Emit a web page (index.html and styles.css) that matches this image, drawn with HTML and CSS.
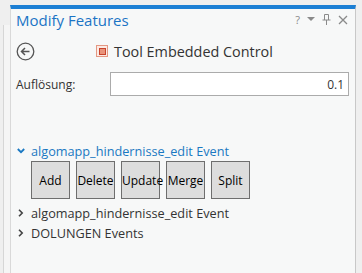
FILE: index.html
```html
<!DOCTYPE html>
<html lang="de">
<head>
    <meta charset="UTF-8">
    <title>Modify Features</title>
    <link rel="stylesheet" href="styles.css">
</head>
<body>
    <div class="frame">
        <div class="side"></div>

        <div class="pane">
            <div class="pane-head">
                <h1 class="pane-title">Modify Features</h1>
                <div class="pane-tools">
                    <span class="tool-help">?</span>
                    <svg class="tool-menu" width="8" height="5" viewBox="0 0 8 5"><path d="M0 0 L8 0 L4 4 Z" fill="#8a8a8a"/></svg>
                    <svg class="tool-pin" width="9" height="11" viewBox="0 0 9 11"><path d="M2.5 0.5 H6.5 M2.5 0.5 V6 M6.5 0.5 V6 M0.5 6 H8.5 M4.5 6 V11" stroke="#8a8a8a" stroke-width="1" fill="none"/></svg>
                    <svg class="tool-close" width="10" height="10" viewBox="0 0 10 10"><path d="M1 1 L9 9 M9 1 L1 9" stroke="#8a8a8a" stroke-width="1.3"/></svg>
                </div>
            </div>

            <div class="tool-row">
                <svg class="back" width="19" height="19" viewBox="0 0 19 19">
                    <circle cx="9.5" cy="9.5" r="8.3" stroke="#555" stroke-width="1.3" fill="none"/>
                    <path d="M13.5 9.5 H5.8 M9 6 L5.5 9.5 L9 13" stroke="#555" stroke-width="1.5" fill="none"/>
                </svg>
                <div class="tool-name">
                    <span class="tool-icon"><span class="tool-icon-inner"></span></span>
                    Tool Embedded Control
                </div>
            </div>

            <div class="field">
                <label class="field-label" for="res">Auflösung:</label>
                <input class="field-input" id="res" type="text" value="0.1">
            </div>

            <div class="group open">
                <div class="group-head">
                    <svg class="chev" width="8" height="6" viewBox="0 0 8 6"><path d="M0.8 1 L4 4.2 L7.2 1" stroke="#1a78c2" stroke-width="1.8" fill="none"/></svg>
                    algomapp_hindernisse_edit Event
                </div>
                <div class="buttons">
                    <button class="btn">Add</button>
                    <button class="btn">Delete</button>
                    <button class="btn">Update</button>
                    <button class="btn">Merge</button>
                    <button class="btn">Split</button>
                </div>
            </div>

            <div class="group">
                <div class="group-head">
                    <svg class="chev" width="8" height="8" viewBox="0 0 8 8"><path d="M2 0.8 L5.2 4 L2 7.2" stroke="#444" stroke-width="1.6" fill="none"/></svg>
                    algomapp_hindernisse_edit Event
                </div>
            </div>

            <div class="group">
                <div class="group-head">
                    <svg class="chev" width="8" height="8" viewBox="0 0 8 8"><path d="M2 0.8 L5.2 4 L2 7.2" stroke="#444" stroke-width="1.6" fill="none"/></svg>
                    DOLUNGEN Events
                </div>
            </div>
        </div>
    </div>
</body>
</html>
```

FILE: styles.css
```css
body {
    margin: 0;
    background-color: #efefef;
    font-family: "Open Sans", "Noto Sans", sans-serif;
    color: #333;
}

.frame {
    display: flex;
    height: 273px;
}

.side {
    width: 6px;
    margin: 25px 0 0 3px;
    border-left: 1px solid #d6d6d6;
    background-color: #f5f5f5;
}

.pane {
    width: 346px;
    margin-top: 5px;
    border-top: 4px solid #1c7fd4;
    border-left: 1px solid #d9d9d9;
    border-right: 1px solid #c8c8c8;
    background-color: #f7f8f8;
    padding: 0 5px;
    box-sizing: border-box;
}

.pane-head {
    display: flex;
    justify-content: space-between;
    align-items: flex-start;
    height: 27px;
}

.pane-title {
    margin: 1px 0 0 0;
    font-size: 15px;
    font-weight: normal;
    color: #1b74c5;
}

.pane-tools {
    display: flex;
    align-items: center;
    gap: 7px;
    margin-top: 3px;
    margin-right: 2px;
}

.tool-help {
    font-size: 11px;
    color: #8a8a8a;
}

.tool-row {
    display: flex;
    align-items: center;
    height: 30px;
}

.back {
    display: block;
}

.tool-name {
    display: flex;
    align-items: center;
    gap: 6px;
    margin-left: 61px;
    font-size: 14.4px;
    color: #333;
}

.tool-icon {
    display: flex;
    align-items: center;
    justify-content: center;
    width: 12px;
    height: 12px;
    box-sizing: border-box;
    border: 1px solid #e49883;
    background-color: #fbeae4;
}

.tool-icon-inner {
    width: 7px;
    height: 7px;
    box-sizing: border-box;
    border: 1px solid #c8432c;
    background-color: #e9937a;
}

.field {
    display: flex;
    align-items: center;
    margin-top: 6px;
}

.field-label {
    width: 94px;
    font-size: 12px;
    color: #333;
}

.field-input {
    width: 239px;
    height: 24px;
    box-sizing: border-box;
    border: 1px solid #ababab;
    background-color: #fff;
    text-align: right;
    font-family: inherit;
    font-size: 12px;
    color: #333;
    padding: 0 4px;
    outline: none;
}

.group.open {
    margin-top: 45px;
}

.group-head {
    display: flex;
    align-items: center;
    gap: 4px;
    height: 20px;
    font-size: 12.7px;
    color: #333;
}

.group.open .group-head {
    color: #1a78c2;
}

.chev {
    display: block;
    margin-left: 1px;
    margin-right: 2px;
}

.buttons {
    display: flex;
    gap: 6px;
    padding-left: 15px;
    margin-bottom: 4px;
}

.btn {
    width: 39px;
    height: 38px;
    padding: 0;
    border: 1px solid #6e6e6e;
    background-color: #dddddd;
    font-family: inherit;
    font-size: 12px;
    color: #000;
    cursor: pointer;
}
```
